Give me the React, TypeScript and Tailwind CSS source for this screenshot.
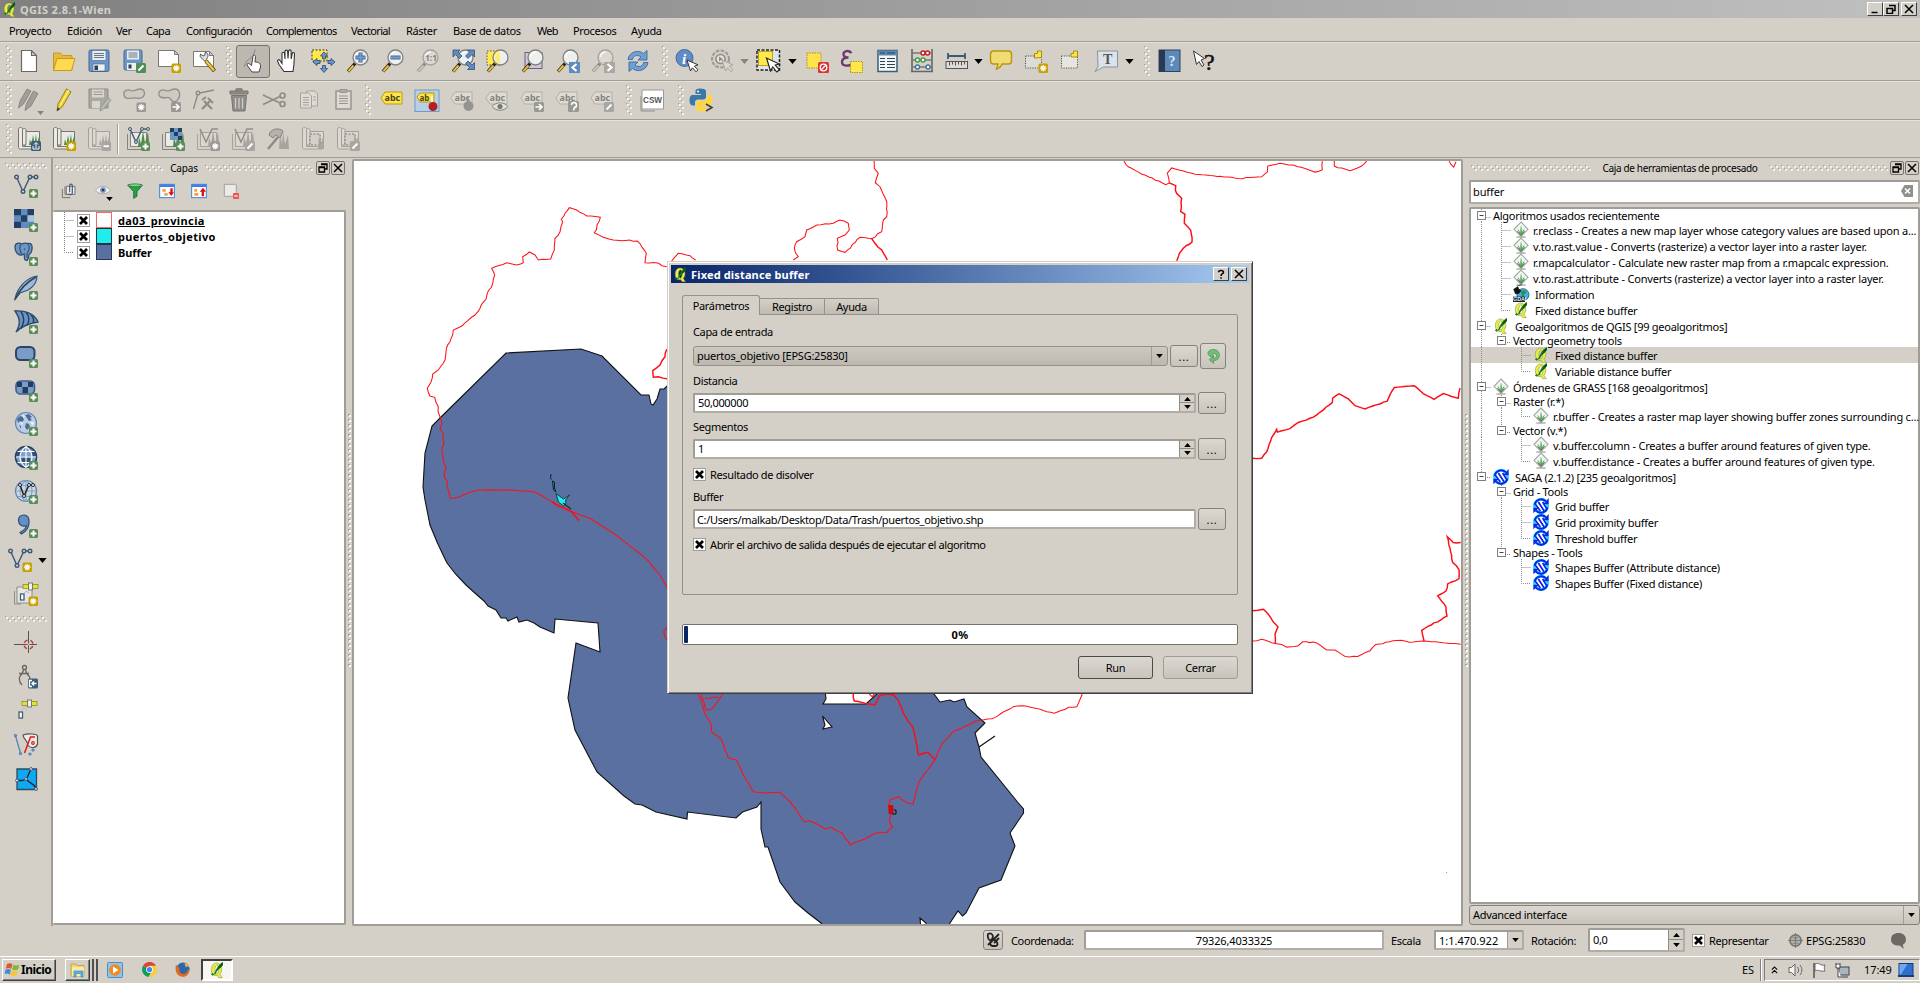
import React, { type ReactNode } from "react";

/* ---------- icon building blocks ---------- */

const Plus = () => (
  <g>
    <rect x="15" y="15" width="9" height="9" rx="1.5" fill="#5a8c5a" />
    <path d="M19.5 16.5v6M16.5 19.5h6" stroke="#fff" strokeWidth="2" />
  </g>
);
const Star = ({ off = false }: { off?: boolean }) => (
  <g>
    <rect x="14.5" y="14.5" width="9.5" height="9.5" rx="1.5" fill={off ? "#9a9893" : "#c8a000"} />
    <path d="M19.2 16v6.500M16 19.200h6.500M17 17l4.500 4.500M21.500 17l-4.500 4.500" stroke="#fff" strokeWidth="1.200" />
  </g>
);
const GoBadge = () => (
  <g>
    <rect x="14" y="14" width="10" height="10" rx="1.5" fill="#9a9893" />
    <path d="M15.500 19h6M19 16l3 3-3 3" stroke="#fff" strokeWidth="1.600" fill="none" />
  </g>
);
const PenBadge = ({ on = false }: { on?: boolean }) => (
  <g>
    <rect x="14" y="14" width="10" height="10" rx="1.5" fill={on ? "#4f8f55" : "#a8a6a0"} />
    <path d="M16.500 21.500l5-5" stroke="#fff" strokeWidth="2" />
  </g>
);
const Lens = ({ off = false }: { off?: boolean }) => (
  <g>
    <path d="M9 14.500L2 22.500" stroke={off ? "#8b8984" : "#222"} strokeWidth="3.400" />
    <path d="M7.500 16.500L2.300 22.300" stroke={off ? "#c9c6bf" : "#f2c12e"} strokeWidth="2" />
    <circle cx="14.500" cy="8.500" r="7.500" fill={off ? "#dcd9d2" : "#eef0f0"} stroke={off ? "#a5a39d" : "#83817c"} strokeWidth="1.300" />
    <path d="M9.500 8a5 5 0 0 1 5-5" stroke="#fff" strokeWidth="1.300" fill="none" />
  </g>
);
const Cursor = ({ off = false }: { off?: boolean }) => (
  <path d="M12 11l3.500 11 2-3.200 3.500 4 2-2-3.700-3.500 3.700-1.500z" fill={off ? "#dad7d0" : "#fff"} stroke={off ? "#a5a39d" : "#333"} strokeWidth="1" />
);
const Nodes = ({ c = "#3d5a78" }: { c?: string }) => (
  <g stroke={c} strokeWidth="1.400" fill="#d4d0c8">
    <path d="M2.500 3L9 17.500 16 3h6" fill="none" />
    <circle cx="2.500" cy="3" r="1.800" />
    <circle cx="9" cy="17.500" r="1.800" />
    <circle cx="16" cy="3" r="1.800" />
    <circle cx="22" cy="3" r="1.800" />
  </g>
);
const MapRoll = ({ off = false }: { off?: boolean }) => (
  <g stroke={off ? "#a19f99" : "#76746f"} fill={off ? "#dcd9d2" : "#eceae5"}>
    <path d="M8 4.500h14.500v16H8z" />
    <path d="M1.500 2c0-2 4-2 4 0v17.500h16v2.500h-18c-1.500 0-2-1-2-2z" />
    <path d="M5.500 3c0-2 3.500-2 3.500 0v15H5.500z" />
    <path d="M12 18l1-6 1.500 5 1.500-9 1.500 8L19 7l1 9 2.500-8v10z" fill={off ? "#aaa8a2" : "#4f8a4f"} stroke="none" />
  </g>
);
const Grass = ({ off = false }: { off?: boolean }) => (
  <path d="M12 20L13 10l2 7 2-13L19 16l3-11 1.500 15z" fill={off ? "#a6a49e" : "#4f8a4f"} />
);
const Frame2 = ({ off = false }: { off?: boolean }) => (
  <g fill={off ? "#dad7d0" : "#eceae5"} stroke={off ? "#a5a39d" : "#85837d"}>
    <path d="M1.500 7v15.500H18" fill="none" />
    <path d="M4.500 5.500h16v14h-16z" />
  </g>
);
const Sat = () => (
  <g>
    <rect x="9" y="2.500" width="15" height="4" fill="#e6e619" stroke="#8a8a40" strokeWidth=".8" />
    <rect x="14.500" y="1" width="4" height="7" fill="#eee" stroke="#777" />
  </g>
);
const Tag = ({ on = false }: { on?: boolean }) => (
  <g>
    <path d="M1 10l4-6h17v12H5z" fill={on ? "#ffe34d" : "#dedbd4"} stroke={on ? "#b89b12" : "#b1afa8"} strokeWidth="1" />
    <text x="4.500" y="13" fontSize="9" fontFamily="Noto Sans, sans-serif" fontWeight="700" fill={on ? "#4a4318" : "#85837e"}>abc</text>
  </g>
);
const WorldBase = ({ fill = "#b9cee6" }: { fill?: string }) => <circle cx="12" cy="11" r="10.500" fill={fill} stroke="#5f85b3" strokeWidth="1.200" />;
const Mesh = ({ c }: { c: string }) => (
  <path d="M2 11h20M12 .5v21M3.500 5.500h17M3.500 16.500h17M12 .5c-8 6-8 15 0 21M12 .5c8 6 8 15 0 21" fill="none" stroke={c} strokeWidth="1.100" />
);
const QLeaf = () => (
  <g>
    <path d="M12 1.500C6.500 1 3.500 6 3.500 11.500S6 20.500 10.500 20.500l2-.3 2 3.300h5.500l-3.500-5c5-6 3-16-4.500-17zM11.500 4.500c4 1 4 10 1 13.500-4.500-1-5-11-1-13.500z" fill="#e6ec4e" stroke="#78861e" strokeWidth=".7" fillRule="evenodd" />
    <path d="M20.500 0C15 3 11 9 7.500 18l1.800.800C12 13 16 9 20.500 5z" fill="#117a18" />
    <path d="M20.500 0L17 5l-4 7 5-4 3-4z" fill="#0a5510" />
    <path d="M3 18.500h5M5.500 16.500v4" stroke="#137a18" strokeWidth="1.400" />
  </g>
);

const ICONS: Record<string, ReactNode> = {
  page: <path d="M4.500 1.500h10l5 5v16h-15zM14.500 1.500v5h5" fill="#fff" stroke="#6b6964" strokeWidth="1.200" />,
  open: (
    <g stroke="#c79a1b" strokeWidth="1">
      <path d="M1.500 21V4h7l2 2.500H20V21z" fill="#e8b93c" />
      <path d="M1.500 21.500L5 9.500h18L19.500 21.500z" fill="#ffd94f" />
    </g>
  ),
  save: (
    <g>
      <rect x="2" y="1" width="20" height="21.500" rx="1.500" fill="#6d96c8" stroke="#44688f" />
      <rect x="5" y="1.500" width="14" height="10" fill="#e9edf2" stroke="#44688f" strokeWidth=".6" />
      <path d="M7 4.500h10M7 6.500h10M7 8.500h10" stroke="#6b7680" />
      <rect x="6" y="15" width="12" height="7" fill="#eef0f2" stroke="#44688f" strokeWidth=".6" />
      <rect x="7.500" y="16.500" width="3.500" height="4.500" fill="#2c3f55" />
    </g>
  ),
  saveas: (
    <g>
      <rect x="2" y="1" width="18" height="20" rx="1.500" fill="#6d96c8" stroke="#44688f" />
      <rect x="5" y="1.500" width="12" height="9" fill="#e9edf2" />
      <path d="M6.500 4h9M6.500 6h9M6.500 8h9" stroke="#6b7680" />
      <rect x="5" y="14" width="9" height="7" fill="#eef0f2" />
      <rect x="6.500" y="15.500" width="3" height="4" fill="#2c3f55" />
      <PenBadge on />
    </g>
  ),
  composer: (
    <g>
      <path d="M1.500 1.500h16l4 4v12h-20zM17.500 1.500v4h4" fill="#fff" stroke="#7a7872" />
      <Star />
    </g>
  ),
  manager: (
    <g>
      <path d="M1.500 2.500h16l4 4v11h-20zM17.500 2.500v4h4" fill="#fff" stroke="#7a7872" />
      <path d="M14 12l8.500 10" stroke="#5b4a18" strokeWidth="4" />
      <path d="M14 12l8 9.500" stroke="#f1c93c" strokeWidth="2.400" />
      <path d="M13 12.500L9.500 9a3 3 0 0 1-1-4l2.500 2 2-1V3.500c3 0 3.500 3 2.500 5l-1 2z" fill="#ddd" stroke="#555" />
    </g>
  ),
  touch: (
    <g>
      <path d="M3 18C6 7 12 12 14 .5" stroke="#888" fill="none" />
      <path d="M11 23l-5-7c-.5-1.500 1.500-2 2.500-1l2 1.500L12 7c.5-1.500 2.500-1 2.500.5L14 13c4 0 6 1.500 5.500 5l-1.500 5z" fill="#fff" stroke="#444" />
    </g>
  ),
  hand: (
    <path
      d="M8 22.500L3 15.500 1.500 12c0-1.500 1.500-1.800 2.300-.8L6 14.500V4.500c0-1.600 2.300-1.600 2.500 0L9 10V2.300C9 .7 11.500.7 11.600 2.300l.4 7.200L12.600 2c.2-1.500 2.400-1.500 2.500 0l.1 8 1-5.500c.3-1.400 2.300-1.200 2.300.3l-.5 10L17 22.500z"
      fill="#fff" stroke="#333" strokeWidth="1.100"
    />
  ),
  pansel: (
    <g>
      <rect x="1" y="1" width="15" height="11" fill="#ffe94a" stroke="#333" strokeDasharray="2 1.500" />
      <path d="M13 3l3.500 4h-2v3h-3V7h-2zM13 23.500l-3.500-4h2v-3h3v3h2zM2 13l4-3.500v2h3v3H6v2zM24 13l-4-3.500v2h-3v3h3v2z" fill="#6d96c8" stroke="#2f547e" strokeWidth=".9" />
    </g>
  ),
  zin: <g><Lens /><path d="M14.500 3.500v10M9.500 8.500h10" stroke="#41698f" strokeWidth="4" /><path d="M14.500 4v9M10 8.500h9" stroke="#6f9ccc" strokeWidth="2.200" /></g>,
  zout: <g><Lens /><path d="M9.500 8.500h10" stroke="#41698f" strokeWidth="4" /><path d="M10 8.500h9" stroke="#6f9ccc" strokeWidth="2.200" /></g>,
  z11: <g><Lens off /><text x="9" y="12" fontSize="8.500" fontWeight="700" fontFamily="Noto Sans, sans-serif" fill="#84827d">1:1</text></g>,
  zfull: (
    <g>
      <Lens />
      <path d="M2 1h7L7 3l4 4-2.500 2.500-4-4L2 8zM23.500 1h-7l2 2-4 4L17 9.500l4-4 2.500 2.500zM23.500 20.500h-7l2-2-4-4 2.500-2.500 4 4 2.500-2.500z" fill="#5f8cc0" stroke="#2e4f78" strokeWidth=".8" />
    </g>
  ),
  zsel: <g><rect x="1" y="2" width="13" height="14" fill="#ffe94a" stroke="#555" strokeDasharray="1.500 1.500" /><Lens /><path d="M9 13V4.500a8 8 0 0 1 5-3v13z" fill="#ffe94a" opacity=".7" /></g>,
  zlay: <g><rect x="4" y="3.500" width="17" height="16" fill="#cfc9d6" stroke="#6b6078" /><Lens /></g>,
  zlast: <g><Lens /><rect x="13" y="13" width="11" height="11" fill="#5f8cc0" /><path d="M20.500 15l-4 3.500 4 3.500" stroke="#fff" strokeWidth="2.200" fill="none" /></g>,
  znext: <g><Lens off /><rect x="13" y="13" width="11" height="11" fill="#aaa8a2" /><path d="M16.500 15l4 3.500-4 3.500" stroke="#fff" strokeWidth="2.200" fill="none" /></g>,
  refresh: (
    <g fill="#6f9fd4" stroke="#3d6a9c" strokeWidth=".9">
      <path d="M2 10.500C3 3 12 0 17.500 4.500L21 1.500V11h-9l3-3C11 5 7 7 6.500 10.500z" />
      <path d="M22 13.500C21 21 12 24 6.500 19.500L3 22.500V13h9l-3 3c4 3 8 1 8.500-2.500z" />
    </g>
  ),
  identify: (
    <g>
      <circle cx="9.500" cy="9" r="8.500" fill="#5f8cc5" stroke="#456b9a" />
      <text x="7" y="14.500" fontSize="15" fontStyle="italic" fontWeight="700" fontFamily="Liberation Serif, serif" fill="#fff">i</text>
      <Cursor />
    </g>
  ),
  action: (
    <g>
      <circle cx="10.500" cy="10" r="8.500" fill="#d0cdc6" stroke="#9c9a94" strokeWidth="2" strokeDasharray="3.500 1.500" />
      <circle cx="10.500" cy="10" r="4.500" fill="#e6e3dd" stroke="#8f8d87" strokeWidth="1.600" />
      <path d="M9 7.500l4 2.500-4 2.500z" fill="#8f8d87" />
      <Cursor off />
    </g>
  ),
  select: (
    <g>
      <rect x="1" y="1" width="22.500" height="20" fill="#dfe4ec" stroke="#222" strokeWidth="1.500" strokeDasharray="3 1.500" />
      <rect x="2.500" y="2.500" width="14" height="14" fill="#ffe94a" stroke="#b9a41c" />
      <path d="M10.500 9l4 13 2.300-4 4 5 2.500-2-4-5 4-1z" fill="#fff" stroke="#222" strokeWidth="1.200" />
    </g>
  ),
  deselect: (
    <g>
      <rect x="2" y="4" width="14" height="15" fill="#ffe34d" stroke="#a8931e" strokeDasharray="1.500 1" />
      <rect x="13" y="13" width="11" height="11" rx="1.500" fill="#db3434" />
      <circle cx="18.500" cy="18.500" r="3.300" fill="none" stroke="#fff" strokeWidth="1.300" />
      <path d="M16 21l5-5" stroke="#fff" strokeWidth="1.300" />
    </g>
  ),
  expr: (
    <g>
      <path d="M11.500 4C9 .5 3 2 3.500 5.500c.3 2 2.500 3 5 3-4 0-6.500 1.500-6.500 4.500 0 4.500 7.500 5 10.500 1" fill="none" stroke="#6a3a6c" strokeWidth="2.300" />
      <rect x="10.500" y="12.500" width="12" height="11" fill="#ffe94a" stroke="#a8931e" strokeDasharray="1.500 1" />
    </g>
  ),
  table: (
    <g>
      <rect x="3" y="1.500" width="19" height="21" fill="#f3f5f7" stroke="#3c5b78" strokeWidth="1.500" />
      <rect x="3" y="1.500" width="19" height="5" fill="#5b8ab0" />
      <path d="M5 9.500h5M12 9.500h8M5 12.500h5M12 12.500h8M5 15.500h5M12 15.500h8M5 18.500h5M12 18.500h8M5 4h5M12 4h8" stroke="#2b4257" strokeWidth="1.200" />
    </g>
  ),
  abacus: (
    <g strokeWidth="1.400">
      <path d="M2 0v23M22 0v23M1 22.500h22" stroke="#666" strokeWidth="1.600" />
      <path d="M2 4h20M2 11h20M2 18h20" stroke="#777" />
      <g fill="#fff"><circle cx="13" cy="4" r="2" stroke="#c11b1b" /><circle cx="17.500" cy="4" r="2" stroke="#c11b1b" />
        <circle cx="7.500" cy="11" r="2" stroke="#3f9a45" /><circle cx="13" cy="11" r="2" stroke="#3f9a45" />
        <circle cx="7.500" cy="18" r="2" stroke="#45719c" /><circle cx="18" cy="18" r="2" stroke="#45719c" /></g>
    </g>
  ),
  measure: (
    <g>
      <path d="M2.500 7h18M3 4v6M20 4v6" stroke="#3a5a73" strokeWidth="1.800" />
      <rect x="1" y="12.500" width="21.500" height="7" fill="#dcdcda" stroke="#555" />
      <path d="M4.500 12.500v4M7.500 12.500v3M10.500 12.500v4M13.500 12.500v3M16.500 12.500v4M19.500 12.500v3" stroke="#555" />
    </g>
  ),
  tip: <path d="M4.500 2h15a3 3 0 0 1 3 3v7a3 3 0 0 1-3 3h-6.500c-1 3-3 4-5.500 5l1.500-5H4.500a3 3 0 0 1-3-3V5a3 3 0 0 1 3-3z" fill="#efdc72" stroke="#b8960c" strokeWidth="1.400" />,
  bmnew: (
    <g>
      <rect x="1.500" y="7" width="16" height="12" fill="#dedcd6" stroke="#555" strokeDasharray="1.200 1.200" />
      <path d="M10.500 9V4.500h3V2h4v6.500z" fill="#ffe34d" stroke="#a88c10" /><Star />
    </g>
  ),
  bm: (
    <g>
      <rect x="2.500" y="7" width="16" height="12" fill="#e6e5e0" stroke="#555" strokeDasharray="1.200 1.200" />
      <path d="M12 8V4.500h2.500V2h4v6z" fill="#ffe34d" stroke="#a88c10" />
    </g>
  ),
  annot: (
    <g>
      <path d="M3.500 2h20v16h-14L1 22.500l3-5z" fill="#dce2ea" stroke="#8a939d" />
      <text x="9" y="15" fontSize="14" fontWeight="700" fontFamily="Liberation Serif, serif" fill="#555">T</text>
    </g>
  ),
  help: (
    <g>
      <rect x="2" y="1" width="21" height="21.500" fill="#5d88ba" stroke="#31435c" />
      <rect x="2" y="1" width="6" height="21.500" fill="#2b3950" />
      <text x="11.500" y="16.500" fontSize="14" fontWeight="700" fontFamily="Liberation Serif, serif" fill="#dfeaf6">?</text>
    </g>
  ),
  what: (
    <g>
      <path d="M1.500 2l3 13.500 2.500-3 3 5 2-1.500-3-5 3.500-1.500z" fill="#fff" stroke="#333" />
      <text x="12" y="21" fontSize="24" fontFamily="Liberation Serif, serif" fill="#111" stroke="#111" strokeWidth=".5">?</text>
    </g>
  ),
  pencils: (
    <g fill="#a09e98" stroke="#807e78" strokeWidth=".8">
      <path d="M1.500 20L3 13 10 1l4 2-7.500 13z" /><path d="M8 22.500l1.500-7L16.500 3l4.500 2.500L14 18z" />
    </g>
  ),
  pencil: (
    <g>
      <path d="M5 23l1-7L14.500.8l4.500 3L10.500 18.500z" fill="#e9cc2e" stroke="#8f7a15" strokeWidth=".9" />
      <path d="M16.800 2.200L8 17.500" stroke="#fff39a" strokeWidth="1.300" />
      <path d="M5 23l.5-3.500 2.500 1.600z" fill="#333" />
    </g>
  ),
  saveoff: (
    <g>
      <path d="M2 1h19v19H2z" fill="#aaa8a2" stroke="#8e8c86" /><path d="M5 1.500h12v8H5z" fill="#d8d5ce" /><path d="M6.500 4h9M6.500 6.500h9" stroke="#999" />
      <path d="M5 13h8v7H5z" fill="#d8d5ce" /><path d="M13 23l1-4 7-9 3 2-7.500 9z" fill="#bcbab4" stroke="#8e8c86" strokeWidth=".8" />
    </g>
  ),
  blobnew: <g><path d="M2 7C1 2 6 1 9 2.500s5-1.500 9-1.500c5 0 6 6 2 8.500-3 2-6 0-9 .5C7 10.500 3 11.500 2 7z" fill="#cdcac3" stroke="#918f89" strokeWidth="1.300" /><Star off /></g>,
  blobmove: <g><path d="M2 7C1 2 6 1 9 2.500s5-1.500 9-1.500c5 0 6 7 3 10.500-1 2-3 2.500-5 2-2-1-3-4.500-6-4-3.500.5-7 1-8-2.500z" fill="#cdcac3" stroke="#918f89" strokeWidth="1.300" /><GoBadge /></g>,
  nodeoff: (
    <g stroke="#8e8c86" fill="none" strokeWidth="1.400">
      <circle cx="6" cy="5" r="1.800" /><path d="M5.500 7L1.500 21M8 5L22 2" /><path d="M10 21l8-8M20 21l-8-8" strokeWidth="2.200" /><path d="M16 10l5 5M10 12l4-3" strokeWidth="2" />
    </g>
  ),
  trash: (
    <g fill="#8f8d88" stroke="#777570">
      <path d="M3 3h18v3H3zM9 3V.800h6V3" /><path d="M4.500 7.500h15L18 23H6z" />
      <path d="M8.500 10v10.500M12 10v10.500M15.500 10v10.500" stroke="#cfccc5" strokeWidth="1.300" />
    </g>
  ),
  cut: (
    <g stroke="#8e8c86" fill="none" strokeWidth="1.700">
      <path d="M1 7l17 8M1 16.500l17-8" /><circle cx="20.500" cy="7.500" r="2.500" /><circle cx="20.500" cy="16" r="2.500" />
    </g>
  ),
  copy: <g fill="#dedbd4" stroke="#a5a39d"><path d="M9.500 3h8l3 3v12h-11z" /><path d="M3.500 5h8l3 3v12h-11z" /><path d="M6 9.500h6M6 12h6M6 14.500h6M6 17h6M16 9h3M16 12h3" /></g>,
  paste: <g fill="#dedbd4" stroke="#97958f"><path d="M4 3h15v18H4z" strokeWidth="1.500" /><path d="M8 1.500h7v3H8z" fill="#b0aea8" /><path d="M7 8h9M7 10.500h9M7 13h9M7 15.500h9" /></g>,
  lab1: <Tag on />,
  lab2: (
    <g>
      <rect x="0" y="2" width="24" height="21.500" fill="#b9cfe8" stroke="#6f9ac8" />
      <path d="M2 9l3-4h14v9H5z" fill="#ffe34d" stroke="#b89b12" /><text x="4.500" y="12.500" fontSize="8" fontWeight="700" fontFamily="Noto Sans, sans-serif" fill="#4a4318">ab</text>
      <path d="M17 15V8" stroke="#fff" strokeWidth="1.500" /><circle cx="18" cy="18.500" r="4.500" fill="#b01f24" />
    </g>
  ),
  lab3: <g><Tag /><circle cx="18.500" cy="18" r="5" fill="#96948f" /><path d="M18 14V8" stroke="#96948f" strokeWidth="1.600" /></g>,
  lab4: <g><Tag /><path d="M7 18.500c4-5 12-5 16 0-4 5-12 5-16 0z" fill="#e0ddd7" stroke="#85837e" /><circle cx="15" cy="18.500" r="2.500" fill="#777570" /></g>,
  lab5: <g><Tag /><GoBadge /></g>,
  lab6: <g><Tag /><rect x="13" y="13" width="11" height="11" rx="1.500" fill="#9a9893" /><path d="M16.500 17a2.500 2.500 0 1 1 3 2.500l-1 3" stroke="#fff" strokeWidth="1.500" fill="none" /></g>,
  lab7: <g><Tag /><PenBadge /></g>,
  csw: (
    <g>
      <path d="M1 8v15h14" fill="none" stroke="#8f8d87" /><path d="M2 2h21.500v19H2z" fill="#fff" stroke="#9b9993" />
      <text x="3" y="14.500" fontSize="9" fontWeight="700" fontFamily="Liberation Sans, sans-serif" fill="#555" textLength="19" lengthAdjust="spacingAndGlyphs">CSW</text>
    </g>
  ),
  python: (
    <g>
      <path d="M11.500.5C6 .5 6.500 3 6.500 3v3h5.500v1H4S.5 6.500.5 12s3 5.500 3 5.500h2.500V14.500s0-3 3-3h5s3 0 3-2.800V3.500S17.500.5 11.500.5z" fill="#3b77a8" />
      <path d="M12.500 23.500c5.500 0 5-2.500 5-2.500v-3H12v-1h8s3.500.5 3.500-5-3-5.500-3-5.500H18V9.500s0 3-3 3h-5s-3 0-3 2.800v5.200s-.5 3 5.500 3z" fill="#ffd545" />
      <circle cx="9" cy="3.500" r="1" fill="#fff" /><path d="M17 16l6 3.500-6 3.500" stroke="#444" strokeWidth="1.600" fill="none" />
    </g>
  ),
  g1: <g><MapRoll /><rect x="14" y="14" width="10" height="10" rx="1.500" fill="#3f5c78" /><path d="M19 21v-5M17 17.500l2-2 2 2M16 19v3h6v-3" stroke="#fff" fill="none" /></g>,
  g2: <g><MapRoll /><Star /></g>,
  g3: <g><MapRoll off /><rect x="14.500" y="14.500" width="9.500" height="9.500" rx="1.500" fill="#a8a6a0" /><path d="M16.500 19.200h5.500" stroke="#fff" strokeWidth="1.800" /></g>,
  g4: <g><Frame2 /><Grass /><path d="M4 2l6 13 6-13h6" stroke="#3f6076" strokeWidth="1.500" fill="none" /><g fill="#d4d0c8" stroke="#3f6076"><circle cx="4" cy="2" r="1.500" /><circle cx="10" cy="15" r="1.500" /><circle cx="16" cy="2" r="1.500" /><circle cx="22" cy="2" r="1.500" /></g><Plus /></g>,
  g5: <g><Frame2 /><Grass /><path d="M9 1h12v12H9z" fill="#6b98c4" /><path d="M9 1h4v4H9zM17 1h4v4h-4zM13 5h4v4h-4zM17 9h4v4h-4z" fill="#24405c" /><Plus /></g>,
  g6: <g><Frame2 off /><Grass off /><path d="M4 2l6 13 6-13h6" stroke="#908e88" strokeWidth="1.500" fill="none" /><Star off /></g>,
  g7: <g><Frame2 off /><Grass off /><path d="M4 2l6 13 6-13h6" stroke="#908e88" strokeWidth="1.500" fill="none" /><PenBadge /></g>,
  g8: <g><path d="M13 22L14 8l2 9 1-12 2 12 3-9 1 14z" fill="#a6a49e" /><path d="M2 22L12 10" stroke="#8e8c86" strokeWidth="2.500" /><path d="M3 8c1-6 10-8 14-4l-3 7-4-3-3 3z" fill="#b4b2ac" stroke="#85837e" /></g>,
  g9: <g><MapRoll off /><rect x="9" y="7" width="10" height="11" fill="#d4d0c8" stroke="#777570" strokeDasharray="2 1.500" /><path d="M17 22l1-13 2 10 3-10v13z" fill="#a6a49e" /></g>,
  g10: <g><MapRoll off /><rect x="9" y="7" width="10" height="11" fill="#d4d0c8" stroke="#777570" strokeDasharray="2 1.500" /><path d="M18 16l1-8 2 6 2-6v8z" fill="#a6a49e" /><PenBadge /></g>,
  vadd: <g><Nodes /><Plus /></g>,
  radd: (
    <g>
      <path d="M0 1h20v19H0z" fill="#5f8cc0" /><path d="M0 1h7v6.300H0zM13.500 1H20v6.300h-6.500zM7 7.300h6.500v6.400H7zM0 13.700h7V20H0z" fill="#263f60" />
      <path d="M13.500 7.300H20v6.400h-6.500z" fill="#a9c3e0" /><Plus />
    </g>
  ),
  pgadd: (
    <g>
      <path d="M1 5c0-4 4-4.500 7-3 2-1 4-1 6-.3C17 .5 18.500 3 18 7c-.3 3-1.500 5-3 5.500l-.5 3-1 2.500c-1 1-3 0-3-1.500l-.3-4.500-2.700 1C3 13.500 1 9 1 5z" fill="#6f96c4" stroke="#2d4d73" strokeWidth="1.300" />
      <path d="M7 2.500C5 4 6 9 7.500 12M14 2c1.500 2 2 6-1 9.500v4M10.500 6.500v1.500" stroke="#2d4d73" strokeWidth="1.100" fill="none" /><Plus />
    </g>
  ),
  feather: <g><path d="M1 23C3 12 12 2 23 0c0 6-4 11-9 14l-8 3z" fill="#9dbbdc" stroke="#345778" strokeWidth="1.200" /><path d="M1 23.500C5 14 13 6 22 1" stroke="#2b4258" strokeWidth="1.500" fill="none" /><Plus /></g>,
  mssql: <g><path d="M1 1c10-1 20 3 23 11-7 1-15 3-22 10 5-8 4-14-1-21z" fill="#6d94c4" stroke="#2b4a70" strokeWidth="1.400" /><path d="M7 1.500c4 6 3 12 0 17M12 2c4 5 3 10 1 13.500M17 5c3 3 3 6 2 8" stroke="#23405f" strokeWidth="1.500" fill="none" /><Plus /></g>,
  ora: <g><rect x="2" y="3" width="18.500" height="13" rx="4.500" fill="#7c9cc8" stroke="#2a4568" strokeWidth="2" /><Plus /></g>,
  orar: <g><rect x="2" y="3" width="18.500" height="13" rx="4.500" fill="#7c9cc8" stroke="#3a5f8f" strokeWidth="1.600" /><path d="M3 4h5v5H3zM14 4h5v5h-5zM8.500 9h5.500v6H8.500z" fill="#253c5e" /><Plus /></g>,
  wms: <g><WorldBase /><path d="M3 7l3-3 3 1 1 3-2 2-2-1-2 2zM11 3l4-1 3 3-2 1 2 2-3 1-2-3zM12 11l3 1 1 3-3 3-2-3zM5 13l2 1v3z" fill="#4d6c94" /><path d="M9 2l2 3-2 1zM16 10l4 0-1 4zM6 10l3 1-1 2z" fill="#eef3f9" /><Plus /></g>,
  wcs: <g><WorldBase fill="#5f85b0" /><circle cx="12" cy="11" r="10.500" fill="none" stroke="#24405f" strokeWidth="1.500" /><path d="M6 4h12v6H6zM2 12h5v6zM17 12h5l-4 6z" fill="#7fa3cc" /><path d="M3 6h4v4H2zM8 12h8v5H8zM17 5h4l1 5h-4z" fill="#33527a" /><Mesh c="#fff" /><Plus /></g>,
  wfs: <g><WorldBase fill="#cfd6dc" /><Mesh c="#7ea3cf" /><path d="M6 5l4 11 5-11h4" stroke="#222" strokeWidth="1.500" fill="none" /><g fill="#fff" stroke="#222"><circle cx="6" cy="5" r="1.500" /><circle cx="10" cy="16" r="1.500" /><circle cx="15" cy="5" r="1.500" /><circle cx="19" cy="5" r="1.500" /></g><Plus /></g>,
  comma: <g><path d="M6 18.500c4-2 6-4 6.500-7-4 2-8-1-8-5S7 1 10 1s5.500 2.500 5 7.500c0 5-3 9-7.500 11.500z" fill="#6690c4" stroke="#2d4d78" strokeWidth="1.200" /><Plus /></g>,
  vnew: <g><Nodes /><Star /></g>,
  gpxnew: <g><path d="M.5 9v13H7" fill="none" stroke="#8f8d87" /><path d="M3 5h15v16H3z" fill="#e6e6e4" stroke="#8f8d87" /><rect x="6.500" y="12" width="3.500" height="6" fill="#fff" stroke="#3f6076" strokeWidth="1.300" /><path d="M11 11c0-2 2-2 4 0" stroke="#aaa" fill="none" /><Sat /><Star /></g>,
  cross: <g><path d="M14.500 0v22M0 13.500h23" stroke="#555" /><circle cx="14.500" cy="13.500" r="4.500" fill="none" stroke="#c03030" strokeWidth="1.400" strokeDasharray="4 3.070" strokeDashoffset="-1.500" /><circle cx="14.500" cy="13.500" r="1" fill="#d4d0c8" /></g>,
  compass: <g stroke="#666" fill="none" strokeWidth="1.300"><circle cx="10.500" cy="2.500" r="2" /><path d="M9.500 5L8 9M11.500 5L13 9M5 8.500h10M8 9c-4 3-3 8 0 11M13 9c3 2 3 4 3 6" /><rect x="14" y="13.500" width="10" height="10" rx="1.500" fill="#3f5c78" stroke="none" /><path d="M18 15.500h-2.500v6H18M22.500 18.500H18M20 16.500l-2 2 2 2" stroke="#fff" /></g>,
  gps: <g><g transform="translate(-1 0)"><Sat /></g><rect x="5" y="13" width="3.500" height="6" fill="#fff" stroke="#3f6076" strokeWidth="1.300" /><path d="M8 11c1-2 3-2 5 1M8 9c2-2 4-2 6 0" stroke="#bbb" fill="none" /></g>,
  topo: (
    <g fill="none" strokeWidth="1.200">
      <path d="M9 2c5-2 14-1 14.500 1v8c-1 4-7 5-10 1 1-4-4-5-4.500-10z" fill="#ecebe8" stroke="#555" /><path d="M1.500 3l5 17" stroke="#4a7fb8" /><path d="M21 4h-4.500L10.500 20" stroke="#d81e1e" strokeWidth="1.500" />
      <circle cx="1.500" cy="2.500" r="1" stroke="#4a7fb8" /><circle cx="6.500" cy="20.500" r="1" stroke="#4a7fb8" /><circle cx="19" cy="10" r="1.300" stroke="#d81e1e" /><circle cx="19" cy="17" r="1" stroke="#4a7fb8" /><circle cx="16" cy="21" r="1" stroke="#4a7fb8" />
    </g>
  ),
  road: <g><path d="M3 2h19.500v20.500H3z" fill="#0fa8f5" stroke="#2f4a5c" strokeWidth="1.300" /><path d="M2.500 13.500h5.500l4.500-1.500L17 2M12.500 12c1 4 8 4 9.500 9.500" stroke="#123" fill="none" strokeWidth="1.300" /><g fill="#fff" stroke="#456"><circle cx="3" cy="13.500" r="1.400" /><circle cx="12" cy="12" r="1.400" /><circle cx="17" cy="2" r="1.400" /><circle cx="22" cy="22" r="1.400" /></g></g>,
  qgis: <QLeaf />,
  grass: (
    <g>
      <path d="M12 0L22.500 11 12 21.500 1.500 11z" fill="#f6f8f6" stroke="#a3aaa3" strokeWidth="1.700" />
      <path d="M12 20C9 16 7.500 13 6.500 10c2.500 2 3.500 4 4.500 6 0-4 0-7 1-11 1 4 1.500 7 1.500 11 .5-3 1.500-4 4-6-1 4-2.500 7-5.500 10z" fill="#56a85c" />
      <path d="M17.500 14L12 20l-5.500-6" stroke="#4e5a4e" strokeWidth="1.300" fill="none" />
      <path d="M5 22.500h14" stroke="#888" strokeWidth="1.500" />
    </g>
  ),
  gdal: (
    <g>
      <circle cx="15" cy="13" r="9" fill="#3fb0e8" stroke="#134" /><path d="M12 8l6-2 2 4-4 3 2 5-4 2z" fill="#2f8f4f" />
      <path d="M1 5l6-4 2 4 3 2-3 4-5 1zM7 0l6-2" fill="#111" stroke="#111" /><path d="M0 16h18v8H0z" fill="#123" />
      <text x="0" y="23" fontSize="8" fontWeight="700" fontFamily="Liberation Sans, sans-serif" fill="#e4eef4">GDAL</text>
    </g>
  ),
  saga: (
    <g>
      <circle cx="12" cy="12" r="10" fill="#fff" stroke="#12dff5" strokeWidth="4" />
      <g stroke="#0c24e6" fill="none">
        <path d="M19 4.500A10 10 0 0 0 2.500 10M4.500 19A10 10 0 0 0 21.500 14" strokeWidth="3" />
        <path d="M3 8.500l8 11M8 6l8.500 13M14.500 6l5.500 9" strokeWidth="2.600" />
      </g>
      <path d="M23.500 0v9.500h-8.500zM.5 14.500H9L.5 23z" fill="#0c24e6" />
    </g>
  ),
  lgroup: <g fill="#eceae5" stroke="#77756f" strokeWidth="1.500"><path d="M2 9v13h12M6 5v12h11V9" fill="none" /><path d="M8 5h13v12H8z" /><path d="M13 14V4c0-3 4-3 4 0v11c0 3-5 3-6 1" fill="none" stroke="#3c5f86" strokeWidth="1.700" /></g>,
  eye: <g><path d="M1 11C6 3 18 3 23 11 18 18 6 18 1 11z" fill="#f0f0ee" stroke="#a3a19b" strokeWidth="1.300" /><circle cx="12" cy="10.500" r="4.300" fill="#6f95c0" /><circle cx="12" cy="10.500" r="1.800" fill="#24384e" /></g>,
  funnel: <g><path d="M1 3h22L15 13v7l-5 3V13z" fill="#27a343" stroke="#14662a" strokeWidth="1.200" /><ellipse cx="12" cy="3.500" rx="10.500" ry="2.200" fill="#7bd68c" stroke="#14662a" /></g>,
  expand: <g><rect x="1" y="2" width="22" height="20" fill="#fff" stroke="#3f80d8" strokeWidth="1.500" /><rect x="1" y="2" width="22" height="4" fill="#3f80e8" /><path d="M5 9h5v4H5zM8 15h5v4H8z" fill="#f0a040" /><path d="M20.500 8v6h2l-4 5.500-4.500-5.500h3V8z" fill="#e01010" /></g>,
  collapse: <g><rect x="1" y="2" width="22" height="20" fill="#fff" stroke="#3f80d8" strokeWidth="1.500" /><rect x="1" y="2" width="22" height="4" fill="#3f80e8" /><path d="M5 9h4v4H5zM5 15h6v4H5z" fill="#f0a040" /><path d="M16 20v-7h-3l5-6 4.500 6h-3v7z" fill="#e01010" /></g>,
  remove: <g><rect x="2" y="2" width="18" height="18" rx="1" fill="#ebeae6" stroke="#97958f" strokeWidth="1.300" /><rect x="15" y="15" width="9" height="9" rx="1.500" fill="#ef5350" /><path d="M17 19.500h5" stroke="#fff" strokeWidth="1.800" /></g>,
  undo: <path d="M3 6C5 0 15-1 19 3.500c4 4.500 3 11.500-2 14-2 1-3.500 1-5 1v4.500L5 17l7-5.500V15c3.500 0 5.500-2 5-5s-5-4-7-1.500c1 .5 2.500 1.500 2 3-3 2-9 0-9-5.500z" fill="#6fbf76" stroke="#3f8f48" strokeWidth="1" />,
};

function Icon({ n, className = "size-6" }: { n: string; className?: string }) {
  return (
    <svg viewBox="0 0 24 24" className={`${className} shrink-0 overflow-visible`}>
      {ICONS[n]}
    </svg>
  );
}

/* ---------- small widgets ---------- */

const Grip = ({ id, className }: { id: string; className: string }) => (
  <svg className={`${className} shrink-0`}>
    <defs>
      <pattern id={id} width="6" height="6" patternUnits="userSpaceOnUse">
        <rect x="0" y="0" width="1.500" height="1.500" fill="#aaa79f" />
        <rect x="1" y="1" width="1.700" height="1.700" fill="#fff" />
        <rect x="3" y="3" width="1.500" height="1.500" fill="#aaa79f" />
        <rect x="4" y="4" width="1.700" height="1.700" fill="#fff" />
      </pattern>
    </defs>
    <rect width="100%" height="100%" fill={`url(#${id})`} />
  </svg>
);

const Down = ({ off = false, small = false }: { off?: boolean; small?: boolean }) => (
  <svg viewBox="0 0 10 6" className={small ? "h-[4px] w-[7px] shrink-0" : "h-[5px] w-[9px] shrink-0"}>
    <path d="M0 0h10L5 6z" fill={off ? "#85837e" : "#000"} />
  </svg>
);
const Up = () => (
  <svg viewBox="0 0 10 6" className="h-[4px] w-[7px] shrink-0">
    <path d="M0 6h10L5 0z" fill="#000" />
  </svg>
);

const Cell = ({ n }: { n: string }) => (
  <div className="flex h-full w-[35px] shrink-0 items-center justify-center">
    <Icon n={n} />
  </div>
);
const Arrow = ({ w, off }: { w: string; off?: boolean }) => (
  <div className={`flex h-full shrink-0 items-center justify-center ${w}`}>
    <Down off={off} />
  </div>
);
const VGrip = ({ id, w }: { id: string; w: string }) => (
  <div className={`flex h-full shrink-0 items-center justify-center ${w}`}>
    <Grip id={id} className="h-[30px] w-[6px]" />
  </div>
);

const Check = ({ size = "size-[13px]" }: { size?: string }) => (
  <div className={`flex shrink-0 items-center justify-center border border-[#a19e97] bg-white ${size}`}>
    <svg viewBox="0 0 9 9" className="size-[9px]">
      <path d="M1 1l7 7M8 1L1 8" stroke="#000" strokeWidth="2.700" />
    </svg>
  </div>
);

const Field = ({ className, children }: { className: string; children?: ReactNode }) => (
  <div className={`flex items-center rounded-[2px] border-2 border-[#a09d96] border-r-[#b0ada6] border-b-[#b0ada6] bg-white ${className}`}>{children}</div>
);
const Spin = ({ className, children }: { className: string; children: ReactNode }) => (
  <Field className={className}>
    <span className="grow pb-[1px] pl-[3px]">{children}</span>
    <div className="flex w-[15px] flex-col self-stretch border-l border-[#8f8c86] bg-[#d4d0c8]">
      <div className="flex h-1/2 items-center justify-center border-b border-[#8f8c86]"><Up /></div>
      <div className="flex h-1/2 items-center justify-center"><Down small /></div>
    </div>
  </Field>
);
const Btn = ({ className, children }: { className: string; children: ReactNode }) => (
  <div className={`flex shrink-0 items-center justify-center rounded-[3px] border bg-linear-to-b ${className}`}>{children}</div>
);
const FACE = "border-[#85827c] from-[#dbd8d1] to-[#c8c4bc]";
const DockButtons = () => (
  <div className="flex gap-[1px]">
    <div className="flex size-[14px] items-center justify-center rounded-[2px] border border-[#76746e]">
      <svg viewBox="0 0 10 10" className="size-[10px]"><path d="M3 1h6v5H7M1 4h5.500v5H1zM3 1.500h6M1 4.500h5.500" fill="none" stroke="#000" strokeWidth="1.300" /></svg>
    </div>
    <div className="flex size-[14px] items-center justify-center rounded-[2px] border border-[#76746e]">
      <svg viewBox="0 0 10 10" className="size-[10px]"><path d="M1 1l8 8M9 1L1 9" stroke="#000" strokeWidth="1.500" /></svg>
    </div>
  </div>
);
const WinBtn = ({ d }: { d: string }) => (
  <div className="flex h-[14px] w-[16px] items-center justify-center border border-t-white border-r-[#404040] border-b-[#404040] border-l-white bg-[#d4d0c8]">
    <svg viewBox="0 0 10 10" className="size-[10px]"><path d={d} fill="none" stroke="#000" strokeWidth="1.500" /></svg>
  </div>
);

/* ---------- header ---------- */

const MENU = [
  ["Proyecto", "w-[58px]"],
  ["Edición", "w-[49px]"],
  ["Ver", "w-[30px] tracking-[-0.6px]"],
  ["Capa", "w-[40px] tracking-[-0.5px]"],
  ["Configuración", "w-[80px] tracking-[-0.5px]"],
  ["Complementos", "w-[85px] tracking-[-0.7px]"],
  ["Vectorial", "w-[55px] tracking-[-0.65px]"],
  ["Ráster", "w-[47px]"],
  ["Base de datos", "w-[84px]"],
  ["Web", "w-[36px] tracking-[-0.7px]"],
  ["Procesos", "w-[58px]"],
  ["Ayuda", "w-[40px]"],
];
const cells = (s: string) => s.split(" ").map((n) => <Cell key={n} n={n} />);
const BAR = "flex w-full shrink-0 items-center border-t border-b border-t-[#e4e1da] border-b-[#a09d96] pb-[1px]";

function Header() {
  return (
    <>
      <div className="flex h-[18px] shrink-0 items-center bg-linear-to-r from-[#808080] to-[#c0c0c0] pl-[2px]">
        <Icon n="qgis" className="size-[15px]" />
        <span className="ml-[3px] grow font-bold tracking-[0.35px] text-[#d4d0c8]">QGIS 2.8.1-Wien</span>
        <div className="mr-[3px] mb-[1px] flex">
          <WinBtn d="M1.500 8.500h6" />
          <WinBtn d="M3 1.500h6v5H7M1 4.500h5.500v5H1z" />
          <div className="w-[2px]" />
          <WinBtn d="M1 1l8 8M9 1L1 9" />
        </div>
      </div>
      <div className="flex h-[24px] shrink-0 items-center border-b border-[#a09d96] pt-[2px] pl-[9px] tracking-[-0.35px]">
        {MENU.map(([m, cls]) => <span key={m} className={`shrink-0 whitespace-nowrap ${cls}`}>{m}</span>)}
      </div>
      <div className={`${BAR} h-[39px]`}>
        <VGrip id="g1" w="w-[18px] -mr-[7px]" />
        {cells("page open save saveas composer manager")}
        <VGrip id="g2" w="w-[15px]" />
        <div className="flex h-[33px] w-[34px] shrink-0 items-center justify-center rounded-[3px] border border-[#76736d] bg-[#bcb8b0]">
          <Icon n="touch" />
        </div>
        {cells("hand pansel zin zout z11 zfull zsel zlay zlast znext refresh")}
        <VGrip id="g3" w="w-[15px] ml-[2px] -mr-[3px]" />
        {cells("identify action")}
        <Arrow w="w-[11px]" off />
        {cells("select")}
        <Arrow w="w-[14px]" />
        {cells("deselect expr table abacus measure")}
        <Arrow w="w-[9px]" />
        {cells("tip bmnew bm annot")}
        <Arrow w="w-[12px]" />
        <VGrip id="g4" w="w-[18px] ml-[3px] -mr-[5px]" />
        {cells("help what")}
      </div>
      <div className={`${BAR} h-[39px]`}>
        <VGrip id="g5" w="w-[18px] -mr-[7px]" />
        <div className="relative">
          <Cell n="pencils" />
          <div className="absolute right-[2px] bottom-[-3px]"><Down small off /></div>
        </div>
        {cells("pencil saveoff blobnew blobmove nodeoff trash cut copy paste")}
        <VGrip id="g6" w="w-[13px]" />
        {cells("lab1 lab2 lab3 lab4 lab5 lab6 lab7")}
        <VGrip id="g7" w="w-[18px] -mr-[4px] ml-[1px]" />
        {cells("csw")}
        <VGrip id="g8" w="w-[16px] ml-[4px] -mr-[6px]" />
        {cells("python")}
      </div>
      <div className={`${BAR} h-[38px]`}>
        <VGrip id="g9" w="w-[18px] -mr-[7px]" />
        {cells("g1 g2 g3")}
        <div className="mr-[1px] ml-[1px] h-[30px] w-[2px] border-l border-[#a09d96] bg-white" />
        {cells("g4 g5 g6 g7 g8 g9 g10")}
      </div>
    </>
  );
}

/* ---------- left side ---------- */

const SIDE_TOP = "vadd radd pgadd feather mssql ora orar wms wcs wfs comma vnew gpxnew".split(" ");
const SIDE_BOTTOM = "cross compass gps topo road".split(" ");

function SideBar() {
  return (
    <div className="flex w-[51px] shrink-0 flex-col">
      <div className="flex h-[11px] items-end justify-center"><Grip id="s1" className="h-[6px] w-[42px]" /></div>
      {SIDE_TOP.map((n) => (
        <div key={n} className={n === "vnew" ? "flex h-[34px] items-center pl-[8px]" : "flex h-[34px] items-center pl-[14px]"}>
          <Icon n={n} />
          {n === "vnew" && <div className="ml-[6px]"><Down /></div>}
        </div>
      ))}
      <div className="flex h-[15px] items-center justify-center"><Grip id="s2" className="h-[6px] w-[42px]" /></div>
      {SIDE_BOTTOM.map((n) => (
        <div key={n} className="flex h-[34px] items-center pl-[14px]"><Icon n={n} /></div>
      ))}
    </div>
  );
}

const LAYERS = [
  { name: "da03_provincia", swatch: "border-[#f06a6a] bg-white", cls: "underline tracking-[0.4px]" },
  { name: "puertos_objetivo", swatch: "border-[#16383c] bg-[#20eeee]", cls: "tracking-[0.35px]" },
  { name: "Buffer", swatch: "border-[#2a3350] bg-[#5a70a0]", cls: "tracking-[-0.1px]" },
];

function Layers() {
  return (
    <div className="flex w-[296px] shrink-0 flex-col border-l-2 border-[#a19e97] pt-[3px]">
      <div className="flex h-[14px] items-center pl-[2px]">
        <Grip id="d1" className="h-[6px] w-[108px]" />
        <span className="w-[42px] text-center text-[10px] tracking-[-0.2px]">Capas</span>
        <Grip id="d2" className="h-[6px] w-[108px]" />
        <div className="ml-[3px]"><DockButtons /></div>
      </div>
      <div className="flex h-[35px] items-center gap-[16px] pb-[3px] pl-[8px]">
        <Icon n="lgroup" className="size-4" />
        <div className="relative mr-0 ml-[2px]">
          <Icon n="eye" className="size-4" />
          <div className="absolute -right-[2px] -bottom-[2px]"><Down small /></div>
        </div>
        <Icon n="funnel" className="size-4" />
        <Icon n="expand" className="size-4" />
        <Icon n="collapse" className="size-4" />
        <Icon n="remove" className="size-4" />
      </div>
      <div className="mr-[1px] mb-[1px] grow rounded-[2px] border-2 border-l-0 border-[#a09d96] bg-white">
        {LAYERS.map((l, i) => (
          <div key={l.name} className="flex h-[16px] items-center">
            <svg className="h-[16px] w-[24px] shrink-0">
              <path d={i === 2 ? "M11.500 0v8.500H21" : "M11.500 0v16M11.500 8.500H21"} fill="none" stroke="#808080" strokeDasharray="1 1" />
            </svg>
            <Check />
            <div className={`ml-[6px] size-[16px] border ${l.swatch}`} />
            <span className={`ml-[6px] font-bold ${l.cls}`}>{l.name}</span>
          </div>
        ))}
      </div>
    </div>
  );
}

const Splitter = ({ className, id }: { className: string; id: string }) => (
  <div className={`flex shrink-0 justify-center pt-[256px] ${className}`}>
    <svg className="h-[253px] w-[3px]">
      <defs>
        <pattern id={id} width="3" height="5" patternUnits="userSpaceOnUse">
          <rect width="2" height="2" fill="#a5a29b" /><rect x="1" y="1" width="2" height="2" fill="#fff" />
        </pattern>
      </defs>
      <rect width="3" height="253" fill={`url(#${id})`} />
    </svg>
  </div>
);

/* ---------- map ---------- */

/** Adds small deterministic wiggles between vertices, in the manner of a digitised coast line. */
function rough(s: string, sx: number, sy: number, ox: number, oy: number, amp = 1.3): string {
  const pts = s.trim().split(/\s+/).map((p) => {
    const [x, y] = p.split(",").map(Number);
    return [ox + x * sx, oy + y * sy];
  });
  let seed = 7;
  const rnd = () => ((seed = (seed * 16807) % 2147483647) / 2147483647 - 0.5) * 2;
  const out: string[] = [pts[0].map((v) => v.toFixed(1)).join(" ")];
  for (let i = 1; i < pts.length; i++) {
    const [x0, y0] = pts[i - 1];
    const [x1, y1] = pts[i];
    const n = Math.floor(Math.hypot(x1 - x0, y1 - y0) / 3.5);
    for (let k = 1; k < n; k++) {
      const t = k / n;
      out.push(`${(x0 + (x1 - x0) * t + rnd() * amp).toFixed(1)} ${(y0 + (y1 - y0) * t + rnd() * amp).toFixed(1)}`);
    }
    out.push(`${x1.toFixed(1)} ${y1.toFixed(1)}`);
  }
  return `M${out.join("L")}`;
}
const T = 1 / 3;
const nw = (s: string, a?: number) => rough(s, T, T, 400, 160, a);
const south = (s: string, a?: number) => rough(s, 1 / 2.8, T, 540, 590, a);
const east = (s: string, a?: number) => rough(s, T, 1 / 2.8, 1080, 150, a);

const BUFFER =
  "M506 353L581 349 602 356 641 395 649 395 651 404 653 405 657 399 660 389 664 389 667 386 900 386 934 694 940 702 950 700 954 702 964 699 967 707 985 723 975 733 979 747 981 757 1017.500 802 1023.500 809 1023.500 813 1010 833 1015 846 1001 880 979 888 966 913 962.500 916 958 911 950 923 948 930 926 930 926 923 920 918 921 930 826 930 821 923 808 913 795 902 780 882 768 847 765 847 761 829 761 802 757 807 742.500 812 736 818 687.500 812 687 819 656 812 642 805 635 804 624 796 597 772 575 730 568 698 576 643 600 652 598 623 555 619 554 633 540 627 534 623 527 620 519 622 517 617 508 621 506 618 501 618 496 610 488 606 484 601 476 594 466 585 455.500 574 447 563 445 559 437 542 430 525 425 500 423 487 425 453 432 426 441 417zM825 690L826 699 823 704 866 704 878 693zM822.500 716L832 727 823 729 825 725z";

const THIN = [
  nw("800,320 776,310 735,308 739,280 712,243 640,240 610,232 583,218 601,172 560,168 530,150 508,143 484,178 488,185 480,215 465,235 463,270 452,297 415,300 405,285 388,276 368,290 370,308 350,315 320,308 275,325 284,345 278,370 262,400 258,418 240,445 225,465 175,503 160,510 150,545 138,575 135,600 115,630 98,642 92,668 82,685 90,708 104,712 115,740 118,765 126,790 120,805 130,822 132,850 126,865 130,900 138,925 132,945 142,965 145,990 150,1015", 0.8),
  nw("150,1015 175,1012 205,998 235,990 340,990 405,996 430,1010 480,1038 540,1065 570,1075 640,1120 700,1165 740,1198 780,1245 805,1290", 0.2),
  nw("815,303 835,280 870,287 887,300", 0.6),
  nw("1180,300 1195,290 1183,265 1190,245 1215,230 1220,210 1250,195 1300,190 1318,180 1345,190 1348,210 1335,225 1312,235 1313,270 1335,277 1380,232 1415,236 1445,215 1450,180 1460,170 1460,125 1440,80 1426,68 1435,40 1423,25 1422,3", 0.7),
  east("132,31 145,47 175,62 257,97 268,92 262,65 275,50 345,68 400,72 475,80 545,75 562,62 563,45 600,37 625,42 640,42 705,62 727,55 727,31", 0.5),
  east("763,31 763,45 810,58 845,45 860,31", 0.5),
  east("1107,31 1121,48 1128,33", 0.3),
  east("519,1375 545,1370 586,1382 605,1385 620,1392 655,1388 668,1377 710,1380 740,1400 765,1400 795,1418 833,1418 870,1402 887,1385 950,1373 1000,1378 1032,1375 1142,1384", 0.6),
  south("442,305 455,345 462,372 478,400 480,425 507,447 527,503 550,510 572,560 598,605 630,610 670,606 700,635 740,695 755,692 800,717 815,712 845,728 868,765 945,728 970,728 987,710 978,695 982,670 975,650 980,630 1005,620 1030,640 1045,642 1060,578 1085,540 1107,508 1125,460 1160,422 1180,415 1220,393 1265,386 1325,350 1360,348 1440,370 1480,352 1503,350 1520,305", 0.5),
  south("450,305 465,360 480,358 497,335 515,305", 0.6),
  south("462,325 500,322", 0.6),
  south("356,112 346,125 350,140 358,155", 0.3),
  south("920,310 930,320 938,310", 0.3),
];
const THICK = [
  nw("1415,236 1425,250 1445,270 1462,300", 0.4),
  nw("800,568 795,590 780,615 758,632 760,652 775,650 805,657", 0.6),
  nw("455,1025 480,1040 515,1055 537,1082", 0.3),
  east("268,92 287,100 290,122 305,135 302,172 315,180 313,205 332,225 336,258 310,275 298,290 290,310", 0.8),
  east("519,863 545,863 560,845 575,805 590,782 592,790 630,780 655,763 700,748 757,707 758,695 777,683 805,697 825,716 855,725 922,703 930,685 943,665 1003,660 1030,682 1062,698 1090,682 1135,695 1140,667", 0.4),
  east("1142,1099 1120,1099 1102,1083 1118,1155 1137,1175 1137,1200 1103,1215 1098,1235 1073,1248 1098,1280 1101,1305 1025,1345 1032,1375", 0.6),
  east("519,1290 550,1286 565,1300 580,1322 594,1335 585,1355 586,1382", 0.4),
  south("877,310 880,333 937,345 950,318 965,312 990,315 1003,330 1018,372 1045,415 1050,440 1060,495 1085,487 1107,510", 0.5),
];

function MapView() {
  return (
    <div className="mt-[1px] w-[1111px] shrink-0 overflow-hidden rounded-[2px] border-2 border-[#a09d96] bg-white">
      <svg viewBox="354 161 1107 763" className="block h-[763px] w-[1107px]">
        <path d={BUFFER} fill="#5a70a0" stroke="#111" strokeWidth="1.100" fillRule="evenodd" />
        <path d="M979 747L995 736" stroke="#111" strokeWidth="1.200" />
        <path d="M551 474l-.5 4 1 1.500M552.500 481l2 1v6l1.500 4-2.500-2z" stroke="#0b1e22" strokeWidth="1" fill="#1aa5a8" />
        <path d="M556 493.500l7.500 5.500 6-4-4 5 .5 3-2.500 3-5-4z" fill="#20eeee" stroke="#12343a" strokeWidth=".9" />
        <path d="M563 503l8 6" stroke="#12343a" strokeWidth="1.300" />
        {THIN.map((d, i) => <path key={i} d={d} fill="none" stroke="#ff1018" strokeWidth="1.050" />)}
        {THICK.map((d, i) => <path key={i} d={d} fill="none" stroke="#ff0c14" strokeWidth="1.450" />)}
        <path d="M888.500 805h4.500l.5 4v5h-5z" fill="#c80c14" />
        <path d="M894 810h2v4h-4" stroke="#111" fill="none" />
        <rect x="1446" y="872" width="1" height="1" fill="#999" />
      </svg>
    </div>
  );
}

/* ---------- processing toolbox ---------- */

type Row = { g: string; t: string; icon?: string; open?: boolean; sel?: boolean };
const ROWS: Row[] = [
  { g: "T", t: "Algoritmos usados recientemente", open: true },
  { g: "IT", t: "r.reclass - Creates a new map layer whose category values are based upon a...", icon: "grass" },
  { g: "IT", t: "v.to.rast.value - Converts (rasterize) a vector layer into a raster layer.", icon: "grass" },
  { g: "IT", t: "r.mapcalculator - Calculate new raster map from a r.mapcalc expression.", icon: "grass" },
  { g: "IT", t: "v.to.rast.attribute - Converts (rasterize) a vector layer into a raster layer.", icon: "grass" },
  { g: "IT", t: "Information", icon: "gdal" },
  { g: "IL", t: "Fixed distance buffer", icon: "qgis" },
  { g: "T", t: "Geoalgoritmos de QGIS [99 geoalgoritmos]", icon: "qgis", open: true },
  { g: "IL", t: "Vector geometry tools", open: true },
  { g: "I T", t: "Fixed distance buffer", icon: "qgis", sel: true },
  { g: "I L", t: "Variable distance buffer", icon: "qgis" },
  { g: "T", t: "Órdenes de GRASS [168 geoalgoritmos]", icon: "grass", open: true },
  { g: "IT", t: "Raster (r.*)", open: true },
  { g: "IIL", t: "r.buffer - Creates a raster map layer showing buffer zones surrounding c...", icon: "grass" },
  { g: "IL", t: "Vector (v.*)", open: true },
  { g: "I T", t: "v.buffer.column - Creates a buffer around features of given type.", icon: "grass" },
  { g: "I L", t: "v.buffer.distance - Creates a buffer around features of given type.", icon: "grass" },
  { g: "L", t: "SAGA (2.1.2) [235 geoalgoritmos]", icon: "saga", open: true },
  { g: " T", t: "Grid - Tools", open: true },
  { g: " IT", t: "Grid buffer", icon: "saga" },
  { g: " IT", t: "Grid proximity buffer", icon: "saga" },
  { g: " IL", t: "Threshold buffer", icon: "saga" },
  { g: " L", t: "Shapes - Tools", open: true },
  { g: "  T", t: "Shapes Buffer (Attribute distance)", icon: "saga" },
  { g: "  L", t: "Shapes Buffer (Fixed distance)", icon: "saga" },
];
const LINES: Record<string, string> = { I: "M10.500 0v16", T: "M10.500 0v16M10.500 8.500H20", L: "M10.500 0v8.500H20" };

function TreeRow({ r }: { r: Row }) {
  const h = r.icon ? "h-[16px]" : "h-[13px]";
  const mid = r.icon ? 8 : 6.5;
  const gap = r.icon === "grass" ? "ml-[4px]" : r.icon ? "ml-[6px]" : "ml-[2px]";
  const track = r.icon === "grass" && r.t.length > 50 ? "tracking-[-0.2px]" : "tracking-[-0.27px]";
  return (
    <div className={`flex items-center ${h} ${r.sel ? "bg-[#d4d0c8]" : ""}`}>
      {r.g.split("").map((c, i) => (
        <svg key={i} className={`w-[20px] shrink-0 ${h}`}>
          {LINES[c] && <path d={LINES[c]} fill="none" stroke="#8a8a8a" strokeDasharray="1 1" />}
          {r.open && i === r.g.length - 1 && (
            <g><rect x="6.500" y={Math.round(mid) - 4.5} width="8" height="8" fill="#fff" stroke="#808080" /><path d={`M8.500 ${Math.round(mid) - 0.5}h4`} stroke="#444" /></g>
          )}
        </svg>
      ))}
      {r.icon && <div className="ml-[2px]"><Icon n={r.icon} className="size-4" /></div>}
      <span className={`whitespace-nowrap ${gap} ${track}`}>{r.t}</span>
    </div>
  );
}

function Toolbox() {
  return (
    <div className="flex w-[451px] shrink-0 flex-col pt-[3px]">
      <div className="flex h-[14px] items-center pl-[2px]">
        <Grip id="t1" className="h-[6px] w-[120px]" />
        <span className="w-[178px] text-center text-[10px] tracking-[-0.35px] whitespace-nowrap">Caja de herramientas de procesado</span>
        <Grip id="t2" className="h-[6px] w-[119px]" />
        <div className="ml-[2px]"><DockButtons /></div>
      </div>
      <Field className="mt-[5px] h-[24px] pr-[5px] pl-[2px]">
        <span className="grow pb-[2px] tracking-[-0.1px]">buffer</span>
        <svg viewBox="0 0 12 12" className="mb-[2px] size-[12px]"><path d="M3.500 0H12v12H3.500L0 6z" fill="#8f8f8f" /><path d="M4 3.500l5 5M9 3.500l-5 5" stroke="#fff" strokeWidth="1.500" /></svg>
      </Field>
      <div className="mt-[3px] h-[697px] rounded-[2px] border-2 border-[#a09d96] bg-white">
        {ROWS.map((r, i) => <TreeRow key={i} r={r} />)}
      </div>
      <Btn className={`mt-[1px] h-[20px] w-full ${FACE}`}>
        <span className="grow pb-[2px] pl-[3px] tracking-[-0.3px]">Advanced interface</span>
        <div className="flex w-[16px] items-center justify-center self-stretch border-l border-[#a09d96]"><Down small /></div>
      </Btn>
    </div>
  );
}

/* ---------- bottom bars ---------- */

function StatusBar() {
  return (
    <div className="flex h-[30px] shrink-0 items-center pb-[2px] pl-[983px] tracking-[-0.35px]">
      <Btn className={`size-[20px] ${FACE}`}>
        <svg viewBox="0 0 16 16" className="size-[16px]"><path d="M3 2c4-2 6 2 4 5s-5 0-4-5zM8 14c-3 0-4-4-1-6s8 5 4 6zM3 13L14 2M9 11l5-5" fill="none" stroke="#222" strokeWidth="1.800" /></svg>
      </Btn>
      <span className="ml-[8px] w-[73px]">Coordenada:</span>
      <Field className="h-[20px] w-[300px] justify-center tracking-[-0.15px]">79326,4033325</Field>
      <span className="ml-[7px] w-[43px]">Escala</span>
      <Field className="h-[20px] w-[90px] tracking-[0px]">
        <span className="grow pl-[3px]">1:1.470.922</span>
        <div className="flex w-[15px] items-center justify-center self-stretch border-l border-[#a09d96] bg-[#d4d0c8]"><Down small /></div>
      </Field>
      <span className="ml-[7px] w-[57px]">Rotación:</span>
      <Spin className="h-[24px] w-[97px]">0,0</Spin>
      <div className="ml-[7px]"><Check /></div>
      <span className="ml-[4px] w-[79px]">Representar</span>
      <svg viewBox="0 0 16 16" className="size-[15px]"><circle cx="8" cy="8" r="6" fill="#b5b2ab" stroke="#777" strokeWidth="1.800" /><path d="M8 0v16M0 8h16M4.500 4c2 2 5 2 7 0M4.500 12c2-2 5-2 7 0" stroke="#777" fill="none" /></svg>
      <span className="ml-[3px] w-[84px] tracking-[-0.2px]">EPSG:25830</span>
      <svg viewBox="0 0 16 16" className="size-[17px]"><path d="M8 1c4 0 7 2.500 7 6 0 3-1.500 4-3 5l1 4-4-3.200C4 13 1 11 1 7s3-6 7-6z" fill="#6b6963" /></svg>
    </div>
  );
}

const RAISED = "border border-t-white border-r-[#404040] border-b-[#404040] border-l-white shadow-[inset_-1px_-1px_0_#808080]";

function TaskBar() {
  return (
    <div className="flex h-[27px] shrink-0 items-center border-t border-white pb-px pl-[2px]">
      <div className={`flex h-[22px] w-[54px] items-center pl-[2px] ${RAISED}`}>
        <svg viewBox="0 0 16 16" className="size-[15px]">
          <path d="M2 2.500C4 1 6 1 8 2.500L6.500 7.500C5 6 3 6 .8 7.500z" fill="#e2572b" /><path d="M9 3c2 1 4 1 6.500 0L14 8c-2 1-4.500 1-6.500 0z" fill="#7fba3c" />
          <path d="M.5 8.500C2.500 7 4.500 7 6.200 8.500L5 13.500C3 12 1 12-.8 13.500z" fill="#3b8ddb" /><path d="M7.200 9c2 1 4 1 6.500 0l-1.500 5c-2 1-4.500 1-6.500 0z" fill="#fcc52c" />
        </svg>
        <span className="ml-[1px] text-[12px] font-bold tracking-[-0.5px]">Inicio</span>
      </div>
      <div className={`ml-[9px] flex h-[22px] w-[25px] items-center justify-center ${RAISED}`}>
        <svg viewBox="0 0 16 16" className="size-[16px]"><path d="M1 2h5l1 1.500h7V14H1z" fill="#f3d477" stroke="#c9a544" /><path d="M2 5h12v9H2z" fill="#fae9a8" /><path d="M4 15V9h9v6h-2v-3.500H6V15z" fill="#56b5e6" stroke="#2f80b5" strokeWidth=".6" /></svg>
      </div>
      <div className="h-[22px] w-[4px] border-r-2 border-[#505050]" />
      <div className="h-[22px] w-[4px] border-r-2 border-[#505050]" />
      <svg viewBox="0 0 16 16" className="ml-[9px] size-[16px]"><rect x=".5" y=".5" width="15" height="15" rx="1" fill="#8fc3ea" stroke="#4a8fc4" /><circle cx="8" cy="8" r="5.800" fill="#f28a1c" /><path d="M6 4.500l5.500 3.500L6 11.500z" fill="#fff" /></svg>
      <svg viewBox="0 0 16 16" className="ml-[19px] size-[15px]"><path d="M8 8L1 4a8 8 0 0 1 14 0z" fill="#dc4437" /><path d="M1.100 4A8 8 0 0 0 7 15.900L10.500 9.500 8 8z" fill="#109d58" /><path d="M15 4H8l3 5.500L7 15.900A8 8 0 0 0 15 4z" fill="#fccd40" /><circle cx="8" cy="8" r="3.600" fill="#fff" /><circle cx="8" cy="8" r="2.800" fill="#4285f4" /></svg>
      <svg viewBox="0 0 16 16" className="ml-[18px] size-[15px]"><circle cx="8.500" cy="7.500" r="7" fill="#2b67b0" /><path d="M1 3c-1 6 0 12 7 12.700 5 0 8-4 7.500-9.700-.5 2-1.500 3-2.500 3 0 3-3 4-5 3.500C5 12 4 9 5 7L1 3z" fill="#e06a1c" /><path d="M10 1.500c3 0 5 2 5.500 5-1-2-3-2-4-1z" fill="#f5b03a" /></svg>
      <div className="ml-[11px] flex h-[22px] w-[32px] items-center justify-center border-2 border-t-[#404040] border-r-white border-b-white border-l-[#404040] bg-[#f7f6f3]">
        <Icon n="qgis" className="size-4" />
      </div>
      <div className="grow" />
      <span className="w-[18px] tracking-[-0.2px]">ES</span>
      <div className="h-[22px] w-[2px] border-l border-[#808080] bg-white" />
      <div className="ml-[2px] flex h-[22px] w-[156px] items-center border border-t-[#808080] border-r-white border-b-white border-l-[#808080] pl-[6px]">
        <svg viewBox="0 0 8 10" className="h-[10px] w-[7px]"><path d="M1 4.500l3-3 3 3M1 8.500l3-3 3 3" stroke="#000" strokeWidth="1.300" fill="none" /></svg>
        <svg viewBox="0 0 16 16" className="ml-[10px] size-[16px]"><path d="M1 5.500h2.500L7 2v12l-3.500-3.500H1z" fill="#f4f4f4" stroke="#666" /><path d="M9.500 5c1.500 2 1.500 4 0 6M12 3c2.500 3 2.500 7 0 10" stroke="#666" fill="none" /></svg>
        <svg viewBox="0 0 16 16" className="ml-[7px] size-[16px]"><path d="M3 1v15" stroke="#555" strokeWidth="1.500" /><path d="M4 2c4-2 5 2 10 1-1 2-1 4 0 6-5 1-6-2-10 0z" fill="#fff" stroke="#666" /></svg>
        <svg viewBox="0 0 16 16" className="ml-[7px] size-[16px]"><rect x="5" y="5" width="10" height="8" fill="#a9b6c0" stroke="#444" /><path d="M7 15h7M2 1v5h4V1M3 1v2M5 1v2M4 6v9h3" stroke="#444" fill="#fff" /></svg>
        <span className="ml-[14px] w-[34px] tracking-[-0.1px]">17:49</span>
        <svg viewBox="0 0 16 16" className="size-[16px]"><rect x="1" y="1.500" width="14" height="12" fill="#2f6fd0" stroke="#123a7a" /><path d="M1.500 2h8L3 12.500H1.500z" fill="#6fa8f0" /><rect x="0" y="13" width="16" height="2" fill="#1e3f70" /></svg>
      </div>
    </div>
  );
}

/* ---------- dialog ---------- */

const Dots = () => <Btn className={`h-[22px] w-[28px] tracking-[0.7px] ${FACE}`}>...</Btn>;

function Dialog() {
  return (
    <div className="absolute top-[261px] left-[667px] h-[433px] w-[586px] border border-t-[#d4d0c8] border-r-[#404040] border-b-[#404040] border-l-[#d4d0c8] bg-[#d4d0c8] p-[3px] tracking-[-0.35px] shadow-[inset_1px_1px_0_#fff,inset_-1px_-1px_0_#808080]">
      <div className="flex h-[18px] items-center bg-linear-to-r from-[#0a246a] to-[#a6caf0] pr-[2px] pl-[2px]">
        <Icon n="qgis" className="size-[15px]" />
        <span className="ml-[3px] grow font-bold tracking-[0.15px] text-white">Fixed distance buffer</span>
        <div className="flex gap-[2px]">
          <WinBtn d="M2.500 3.200C2.500 .800 7.500 .800 7.500 3.200 7.500 5 5 4.500 5 7M5 8.200v1.500" />
          <WinBtn d="M1 1l8 8M9 1L1 9" />
        </div>
      </div>
      <div className="mt-[12px] ml-[11px] flex h-[19px] items-end">
        <div className="z-10 -mb-[1px] flex h-[20px] w-[78px] items-center justify-center rounded-t-[3px] border border-b-0 border-[#94918a] bg-[#d4d0c8]">Parámetros</div>
        <div className="flex h-[16px] w-[65px] items-center justify-center border-t border-r border-[#94918a] bg-linear-to-b from-[#d4d0c8] to-[#bfbbb3]">Registro</div>
        <div className="flex h-[16px] w-[54px] items-center justify-center rounded-tr-[2px] border-t border-r border-[#94918a] bg-linear-to-b from-[#d4d0c8] to-[#bfbbb3]">Ayuda</div>
      </div>
      <div className="mx-[11px] flex h-[281px] flex-col rounded-[2px] border border-[#94918a] px-[10px] pt-[9px]">
        <span className="h-[16px] leading-[16px]">Capa de entrada</span>
        <div className="mt-[3px] flex h-[26px] items-center gap-[2px]">
          <Btn className="h-[20px] w-[475px] border-[#94918a] from-[#cdc9c1] to-[#bcb8b0]">
            <span className="grow pb-[2px] pl-[3px] tracking-[-0.25px]">puertos_objetivo [EPSG:25830]</span>
            <div className="flex w-[16px] items-center justify-center self-stretch border-l border-[#a09d96]"><Down small /></div>
          </Btn>
          <Dots />
          <Btn className={`h-[26px] w-[26px] ${FACE}`}><Icon n="undo" className="size-[15px]" /></Btn>
        </div>
        <span className="mt-[4px] h-[16px] leading-[16px]">Distancia</span>
        <div className="mt-[3px] flex h-[22px] items-center gap-[2px]">
          <Spin className="h-[20px] w-[503px]">50,000000</Spin>
          <Dots />
        </div>
        <span className="mt-[5px] h-[16px] leading-[16px]">Segmentos</span>
        <div className="mt-[3px] flex h-[22px] items-center gap-[2px]">
          <Spin className="h-[20px] w-[503px]">1</Spin>
          <Dots />
        </div>
        <div className="mt-[6px] flex h-[16px] items-center gap-[4px]"><Check /><span>Resultado de disolver</span></div>
        <span className="mt-[7px] h-[16px] leading-[16px]">Buffer</span>
        <div className="mt-[3px] flex h-[22px] items-center gap-[2px]">
          <Field className="h-[20px] w-[503px] pl-[2px]">C:/Users/malkab/Desktop/Data/Trash/puertos_objetivo.shp</Field>
          <Dots />
        </div>
        <div className="mt-[6px] flex h-[16px] items-center gap-[4px]"><Check /><span className="tracking-[-0.4px]">Abrir el archivo de salida después de ejecutar el algoritmo</span></div>
      </div>
      <div className="mx-[11px] mt-[29px] grid h-[21px] grid-cols-[4px_1fr_4px] items-center rounded-[2px] border border-[#76746e] bg-white px-px">
        <div className="h-[17px] rounded-[1px] bg-[#0a246a]" />
        <span className="text-center font-bold tracking-[0.4px]">0%</span>
      </div>
      <div className="mt-[11px] mr-[11px] flex justify-end gap-[10px]">
        <Btn className="h-[23px] w-[75px] border-[#4c4a46] from-[#dbd8d1] to-[#c8c4bc]">Run</Btn>
        <Btn className="h-[23px] w-[75px] border-[#a09d96] from-[#dbd8d1] to-[#c8c4bc]">Cerrar</Btn>
      </div>
    </div>
  );
}

export default function App() {
  return (
    <div className="relative flex h-[983px] w-[1920px] flex-col overflow-hidden bg-[#d4d0c8] font-['Noto_Sans','Open_Sans',sans-serif] text-[11px] leading-[13px] text-black">
      <Header />
      <div className="flex h-[768px] shrink-0">
        <SideBar />
        <Layers />
        <Splitter id="p1" className="w-[5px]" />
        <MapView />
        <Splitter id="p2" className="w-[6px]" />
        <Toolbox />
      </div>
      <StatusBar />
      <TaskBar />
      <Dialog />
    </div>
  );
}
